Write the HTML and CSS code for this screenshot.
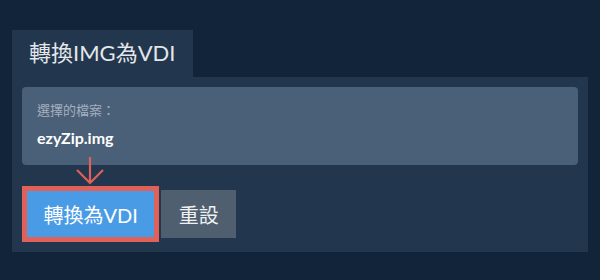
FILE: index.html
```html
<!DOCTYPE html>
<html lang="zh-TW">
<head>
    <meta charset="UTF-8">
    <meta name="viewport" content="width=device-width, initial-scale=1.0">
    <title>轉換IMG為VDI</title>
    <link rel="stylesheet" href="styles.css">
</head>
<body>
    <div class="tool">
        <div class="tab">轉換IMG為VDI</div>
        <div class="panel">
            <div class="file-box">
                <div class="file-label">選擇的檔案：</div>
                <div class="file-name">ezyZip.img</div>
            </div>
            <div class="actions">
                <svg class="hint-arrow" width="30" height="28" viewBox="0 0 30 28">
                    <path d="M15 0 V26 M2 13 L15 26 L28 13" fill="none" stroke="#e0605a" stroke-width="2.2"/>
                </svg>
                <button class="btn btn-primary">轉換為VDI</button>
                <button class="btn btn-secondary">重設</button>
            </div>
        </div>
    </div>
</body>
</html>
```

FILE: styles.css
```css
body {
    margin: 0;
    background: #11243a;
    font-family: Lato, "Noto Sans CJK TC", sans-serif;
    color: #e6e9ed;
}
.tool {
    padding: 30px 12px 0 12px;
}
.tab {
    display: inline-block;
    background: #22364d;
    height: 47px;
    line-height: 46px;
    padding: 0 18px 0 17px;
    font-size: 22px;
    color: #e3e7eb;
}
.panel {
    background: #22364d;
    padding: 10px 10px 14px 10px;
}
.file-box {
    background: #4a5f78;
    border-radius: 4px;
    padding: 13px 15px 14px 15px;
    height: 51px;
}
.file-label {
    font-size: 13px;
    color: #a4b0bf;
    line-height: 20px;
}
.file-name {
    font-size: 16px;
    font-weight: bold;
    color: #ffffff;
    margin-top: 8px;
    line-height: 20px;
}
.actions {
    position: relative;
    display: flex;
    gap: 6px;
    padding: 25px 0 0 4px;
}
.hint-arrow {
    position: absolute;
    left: 53px;
    top: -8px;
}
.btn {
    border: none;
    height: 48px;
    padding: 0 17.5px;
    font-family: Lato, "Noto Sans CJK TC", sans-serif;
    font-size: 20px;
    color: #ffffff;
    cursor: pointer;
}
.btn-primary {
    background: #4a9be6;
    outline: 5px solid #e0605a;
    outline-offset: -1px;
}
.btn-secondary {
    background: #4f5f70;
    color: #eef0f2;
}
```
